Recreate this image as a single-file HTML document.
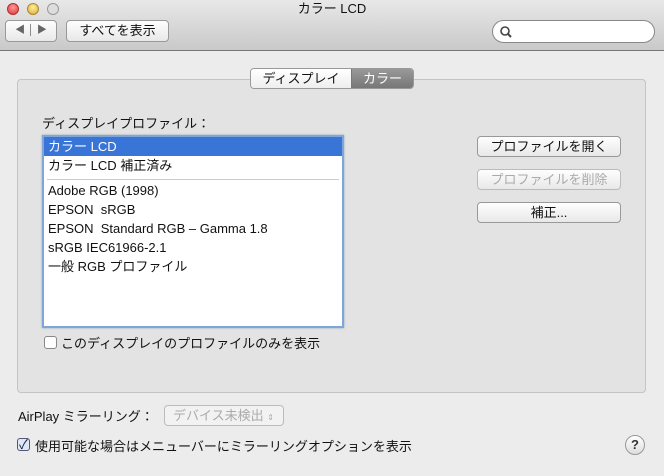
<!DOCTYPE html>
<html><head><meta charset="utf-8"><style>
*{margin:0;padding:0;box-sizing:border-box}
body{width:664px;height:476px;overflow:hidden;background:#ececec;font-family:"Liberation Sans","Noto Sans CJK JP",sans-serif;font-size:13px;color:#111;position:relative}
.abs{position:absolute}
.tb{left:0;top:0;width:664px;height:51px;background:linear-gradient(#e8e8e8,#c9c9c9);border-bottom:1px solid #777}
.dot{width:12px;height:12px;border-radius:50%;top:3px}
.btn{background:linear-gradient(#fefefe,#e8e8e8);border:1px solid #999;border-radius:4px;text-align:center;font-size:13px}
.panel{left:17px;top:79px;width:629px;height:314px;background:#e3e3e3;border:1px solid #c4c4c4;border-radius:4px}
.list{left:42px;top:135px;width:302px;height:193px;background:#fff;border:2px solid #7ea6da;box-shadow:0 0 2px #8ab}
.it{position:absolute;left:4px;font-size:13px;height:19px;line-height:19px}
</style></head><body>
<div class="abs tb"></div>
<div class="abs dot" style="left:7px;background:radial-gradient(circle at 50% 35%,#f99,#d33);border:1px solid #a33"></div>
<div class="abs dot" style="left:27px;background:radial-gradient(circle at 50% 35%,#fe9,#da3);border:1px solid #a83"></div>
<div class="abs dot" style="left:47px;background:#ddd;border:1px solid #999"></div>
<div class="abs" style="left:0;width:664px;top:0;text-align:center;font-size:13px;line-height:18px">カラー LCD</div>
<div class="abs btn" style="left:5px;top:20px;width:52px;height:22px;line-height:20px;color:#666;font-size:10px">◀ │ ▶</div>
<div class="abs btn" style="left:66px;top:20px;width:103px;height:22px;line-height:20px">すべてを表示</div>
<div class="abs" style="left:492px;top:20px;width:163px;height:23px;background:#fff;border:1px solid #888;border-radius:12px"><svg class="abs" style="left:6px;top:4px" width="14" height="14"><circle cx="6" cy="6" r="4" fill="none" stroke="#444" stroke-width="1.6"/><line x1="9" y1="9" x2="12" y2="12" stroke="#444" stroke-width="2"/></svg></div>
<div class="abs panel"></div>
<div class="abs" style="left:250px;top:68px;width:164px;height:21px;border:1px solid #999;border-radius:4px;overflow:hidden;display:flex">
<div style="width:100px;background:linear-gradient(#fff,#eee);text-align:center;line-height:19px">ディスプレイ</div>
<div style="flex:1;background:linear-gradient(#999,#777);color:#fff;text-align:center;line-height:19px;border-left:1px solid #777">カラー</div></div>
<div class="abs" style="left:42px;top:113px">ディスプレイプロファイル：</div>
<div class="abs list">
<div class="abs" style="left:0;top:0;width:298px;height:19px;background:#3875d7"></div>
<div class="it" style="top:0;color:#fff">カラー LCD</div>
<div class="it" style="top:19px">カラー LCD 補正済み</div>
<div class="abs" style="left:3px;top:42px;width:292px;height:1px;background:#ccc"></div>
<div class="it" style="top:44px">Adobe RGB (1998)</div>
<div class="it" style="top:63px">EPSON&nbsp; sRGB</div>
<div class="it" style="top:82px">EPSON&nbsp; Standard RGB – Gamma 1.8</div>
<div class="it" style="top:101px">sRGB IEC61966-2.1</div>
<div class="it" style="top:120px">一般 RGB プロファイル</div>
</div>
<div class="abs" style="left:44px;top:336px;width:13px;height:13px;background:#fff;border:1px solid #888;border-radius:3px"></div>
<div class="abs" style="left:61px;top:333px">このディスプレイのプロファイルのみを表示</div>
<div class="abs btn" style="left:477px;top:136px;width:144px;height:21px;line-height:19px">プロファイルを開く</div>
<div class="abs btn" style="left:477px;top:169px;width:144px;height:21px;line-height:19px;color:#aaa;border-color:#bbb">プロファイルを削除</div>
<div class="abs btn" style="left:477px;top:202px;width:144px;height:21px;line-height:19px">補正...</div>
<div class="abs" style="left:18px;top:406px">AirPlay ミラーリング：</div>
<div class="abs" style="left:164px;top:405px;width:120px;height:21px;border:1px solid #bbb;border-radius:4px;background:#f2f2f2;color:#aaa;line-height:19px;padding-left:8px">デバイス未検出 <span style="font-size:8px">⇕</span></div>
<div class="abs" style="left:17px;top:438px;width:13px;height:13px;background:#dfe8f5;border:1px solid #557;border-radius:3px;font-size:13px;line-height:11px;color:#124;text-align:center">✓</div>
<div class="abs" style="left:35px;top:436px">使用可能な場合はメニューバーにミラーリングオプションを表示</div>
<div class="abs" style="left:625px;top:435px;width:20px;height:20px;border-radius:50%;border:1px solid #999;background:linear-gradient(#fff,#ddd);text-align:center;line-height:18px;font-weight:bold;color:#333">?</div>
</body></html>
